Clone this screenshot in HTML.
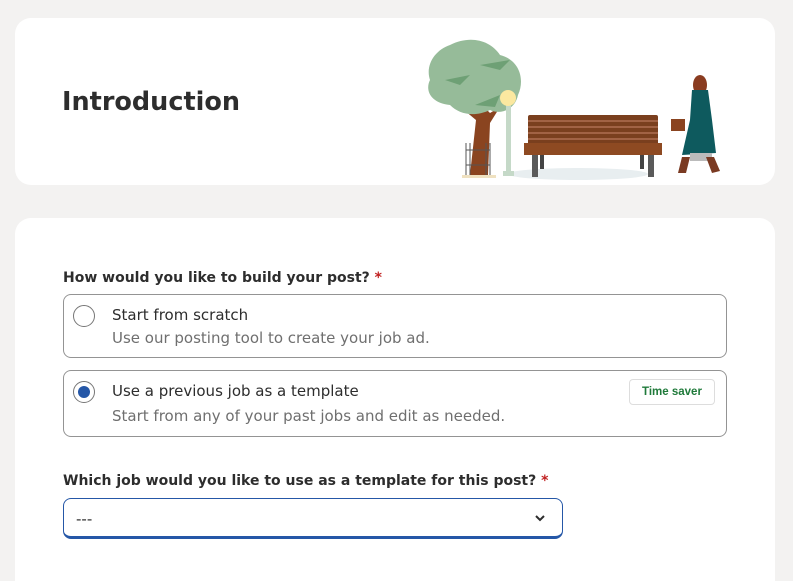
<!DOCTYPE html>
<html style="overflow:hidden;height:581px"><head><style>
body{margin:0;background:#f3f2f1;width:793px;height:581px;overflow:hidden;font-family:"DejaVu Sans","Liberation Sans",sans-serif;color:#2d2d2d;position:relative}
.card{position:absolute;left:15px;width:760px;background:#fff;border-radius:16px}
.abs{position:absolute}
.opt{position:absolute;left:63px;width:662px;border:1px solid #949494;border-radius:8px;background:#fff}
.radio{position:absolute;left:9px;width:22px;height:22px;border:1px solid #767676;border-radius:50%;box-sizing:border-box}
.t1{position:absolute;left:48px;font-size:15px;color:#2d2d2d}
.t2{position:absolute;left:48px;font-size:15px;color:#6f6f6f}
.lbl{position:absolute;left:63px;font-size:14px;font-weight:bold}
.lbl span{color:#c02020}
</style></head><body>
<div class="card" style="top:18px;height:167px"></div>
<div class="card" style="top:218px;height:363px;border-radius:16px 16px 0 0"></div>
<div class="abs" style="left:62px;top:87px;font-size:25.5px;font-weight:bold">Introduction</div>
<svg class="abs" style="left:420px;top:35px" width="320" height="150" viewBox="0 0 320 150">
<ellipse cx="158" cy="139" rx="70" ry="6" fill="#e8eef0"/>
<rect x="42" y="140" width="34" height="3" fill="#efe1c0"/>
<path d="M50 140 L56 85 L44 75 L58 78 L62 70 L70 78 L80 72 L70 88 L68 140Z" fill="#8a4420"/>
<path d="M30 10 C50 0 70 5 80 20 C100 25 105 45 98 60 C95 75 80 80 70 75 C55 82 40 80 30 70 C10 68 5 55 10 45 C5 30 15 15 30 10Z" fill="#96bb99"/>
<path d="M60 30 L90 25 L80 35Z M25 45 L50 40 L40 50Z M55 70 L80 60 L75 72Z" fill="#6ea075"/>
<g stroke="#555" stroke-width="1"><line x1="46" y1="108" x2="46" y2="140"/><line x1="50" y1="108" x2="50" y2="140"/><line x1="66" y1="108" x2="66" y2="140"/><line x1="70" y1="108" x2="70" y2="140"/><line x1="46" y1="115" x2="70" y2="115"/><line x1="46" y1="130" x2="70" y2="130"/></g>
<rect x="86" y="70" width="5" height="70" fill="#c5d9c8"/>
<rect x="83" y="136" width="11" height="5" fill="#c5d9c8"/>
<circle cx="88" cy="63" r="8" fill="#fbe8a0"/>
<rect x="108" y="80" width="130" height="30" rx="2" fill="#7a3f1e"/>
<g stroke="#c8866a" stroke-width="1"><line x1="108" y1="86" x2="238" y2="86"/><line x1="108" y1="92" x2="238" y2="92"/><line x1="108" y1="98" x2="238" y2="98"/><line x1="108" y1="104" x2="238" y2="104"/></g>
<rect x="104" y="108" width="138" height="12" fill="#8e4a22"/>
<rect x="112" y="120" width="6" height="22" fill="#5a5a5a"/><rect x="120" y="120" width="4" height="14" fill="#444"/>
<rect x="228" y="120" width="6" height="22" fill="#5a5a5a"/><rect x="220" y="120" width="4" height="14" fill="#444"/>
<ellipse cx="280" cy="50" rx="7" ry="10" fill="#8a3c20"/>
<path d="M272 55 L288 55 L292 85 L296 118 L262 120 L270 85Z" fill="#0e5a5e"/>
<rect x="270" y="118" width="22" height="8" fill="#bbb"/>
<path d="M262 122 L270 122 L266 138 L258 138Z M286 122 L294 122 L300 136 L292 138Z" fill="#7a3a22"/>
<rect x="251" y="84" width="14" height="12" fill="#8a4420"/>
</svg>
<div class="lbl" style="top:270px">How would you like to build your post? <span>*</span></div>
<div class="opt" style="top:294px;height:62px">
<div class="radio" style="top:10px"></div>
<div class="t1" style="top:11px">Start from scratch</div>
<div class="t2" style="top:34px">Use our posting tool to create your job ad.</div>
</div>
<div class="opt" style="top:370px;height:65px">
<div class="radio" style="top:10px"><div style="position:absolute;left:4px;top:4px;width:12px;height:12px;border-radius:50%;background:#2557a7"></div></div>
<div class="t1" style="top:11px">Use a previous job as a template</div>
<div class="t2" style="top:36px">Start from any of your past jobs and edit as needed.</div>
<div style="position:absolute;right:11px;top:8px;height:24px;width:84px;border:1px solid #ddd;border-radius:4px;font-size:11.5px;font-weight:bold;color:#1f7a3a;text-align:center;line-height:24px;font-family:'Liberation Sans',sans-serif">Time saver</div>
</div>
<div class="lbl" style="top:473px">Which job would you like to use as a template for this post? <span>*</span></div>
<div class="abs" style="left:63px;top:498px;width:500px;height:41px;box-sizing:border-box;border:1px solid #2557a7;border-bottom:3px solid #2557a7;border-radius:8px;background:#fff">
<div class="abs" style="left:12px;top:11px;font-size:15px">---</div>
<svg class="abs" style="right:16px;top:14px" width="12" height="10" viewBox="0 0 12 10"><path d="M2 3 L6 7 L10 3" stroke="#2d2d2d" stroke-width="2" fill="none"/></svg>
</div>
</body></html>
